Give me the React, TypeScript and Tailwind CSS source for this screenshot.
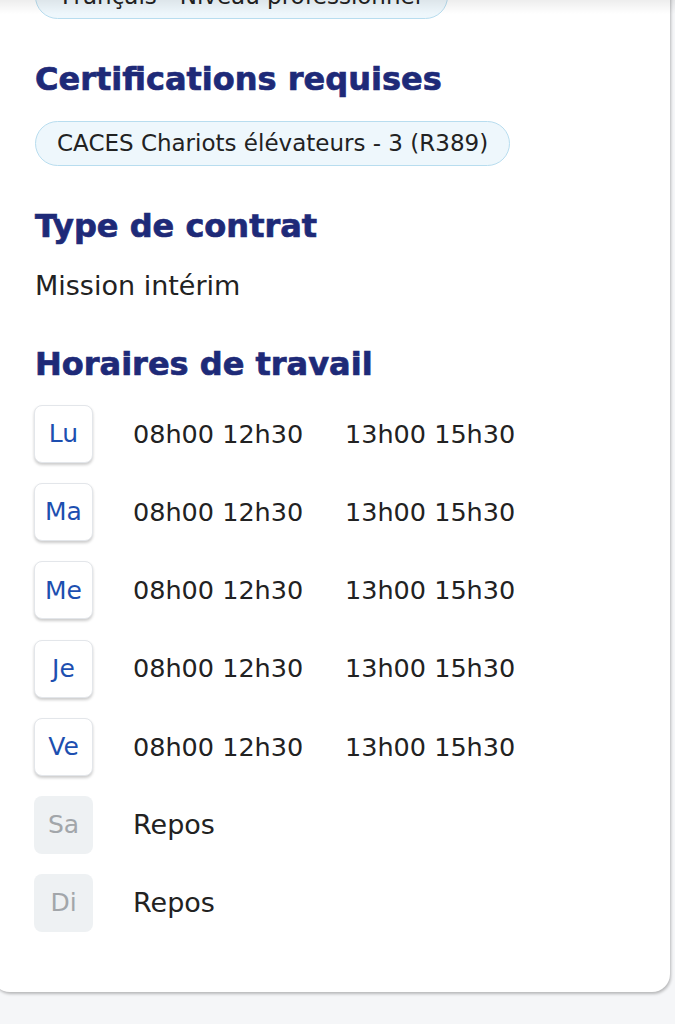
import React from "react";

const days = [
  { d: "Lu", t: ["08h00 12h30", "13h00 15h30"] },
  { d: "Ma", t: ["08h00 12h30", "13h00 15h30"] },
  { d: "Me", t: ["08h00 12h30", "13h00 15h30"] },
  { d: "Je", t: ["08h00 12h30", "13h00 15h30"] },
  { d: "Ve", t: ["08h00 12h30", "13h00 15h30"] },
  { d: "Sa", t: null },
  { d: "Di", t: null },
];

export default function App() {
  return (
    <div
      className="relative h-[1024px] w-[675px] overflow-hidden bg-[#f5f6f8]"
      style={{ fontFamily: '"DejaVu Sans", sans-serif' }}
    >
      <div className="pointer-events-none absolute left-0 top-0 z-10 h-[14px] w-full bg-gradient-to-b from-[rgba(0,0,0,0.07)] to-transparent" />
      <div className="-ml-[8px] mr-[5px] -mt-[26px] rounded-b-[18px] bg-white pb-[60px] pl-[43px] shadow-[1px_2px_3px_rgba(0,0,0,0.25)]">
        <div className="flex">
          <div className="flex h-[45px] items-center rounded-full border border-[#b8ddef] bg-[#eef7fc] px-[26px] text-[23px] text-[#222]">
            Français - Niveau professionnel
          </div>
        </div>
        <h2 className="mt-[42px] h-[36px] text-[32px] font-bold leading-[36px] text-[#1e2a78] [-webkit-text-stroke:0.7px]">
          Certifications requises
        </h2>
        <div className="mt-[24px] flex">
          <div className="flex h-[45px] items-center rounded-full border border-[#b8ddef] bg-[#eef7fc] px-[21px] text-[23px] text-[#222]">
            CACES Chariots élévateurs - 3 (R389)
          </div>
        </div>
        <h2 className="mt-[42px] h-[36px] text-[32px] font-bold leading-[36px] text-[#1e2a78] [-webkit-text-stroke:0.7px]">
          Type de contrat
        </h2>
        <p className="mt-[26px] h-[32px] text-[27px] leading-[32px] text-[#222]">
          Mission intérim
        </p>
        <h2 className="mt-[44px] h-[36px] text-[32px] font-bold leading-[36px] text-[#1e2a78] [-webkit-text-stroke:0.7px]">
          Horaires de travail
        </h2>
        <div className="mt-[23px] -ml-[1px] flex flex-col gap-[20.2px]">
          {days.map((row) => (
            <div key={row.d} className="flex items-center">
              {row.t ? (
                <div className="flex h-[58px] w-[59px] items-center justify-center rounded-[8px] border border-[#e3e6ea] bg-white text-[25px] text-[#1d4fb0] shadow-[0_2px_3px_rgba(0,0,0,0.2)]">
                  {row.d}
                </div>
              ) : (
                <div className="flex h-[58px] w-[59px] items-center justify-center rounded-[8px] bg-[#eef1f3] text-[25px] text-[#a2a6aa]">
                  {row.d}
                </div>
              )}
              {row.t ? (
                <>
                  <span className="ml-[40px] w-[212px] text-[25.5px] text-[#222]">{row.t[0]}</span>
                  <span className="text-[25.5px] text-[#222]">{row.t[1]}</span>
                </>
              ) : (
                <span className="ml-[40px] text-[27px] text-[#222]">Repos</span>
              )}
            </div>
          ))}
        </div>
      </div>
    </div>
  );
}
